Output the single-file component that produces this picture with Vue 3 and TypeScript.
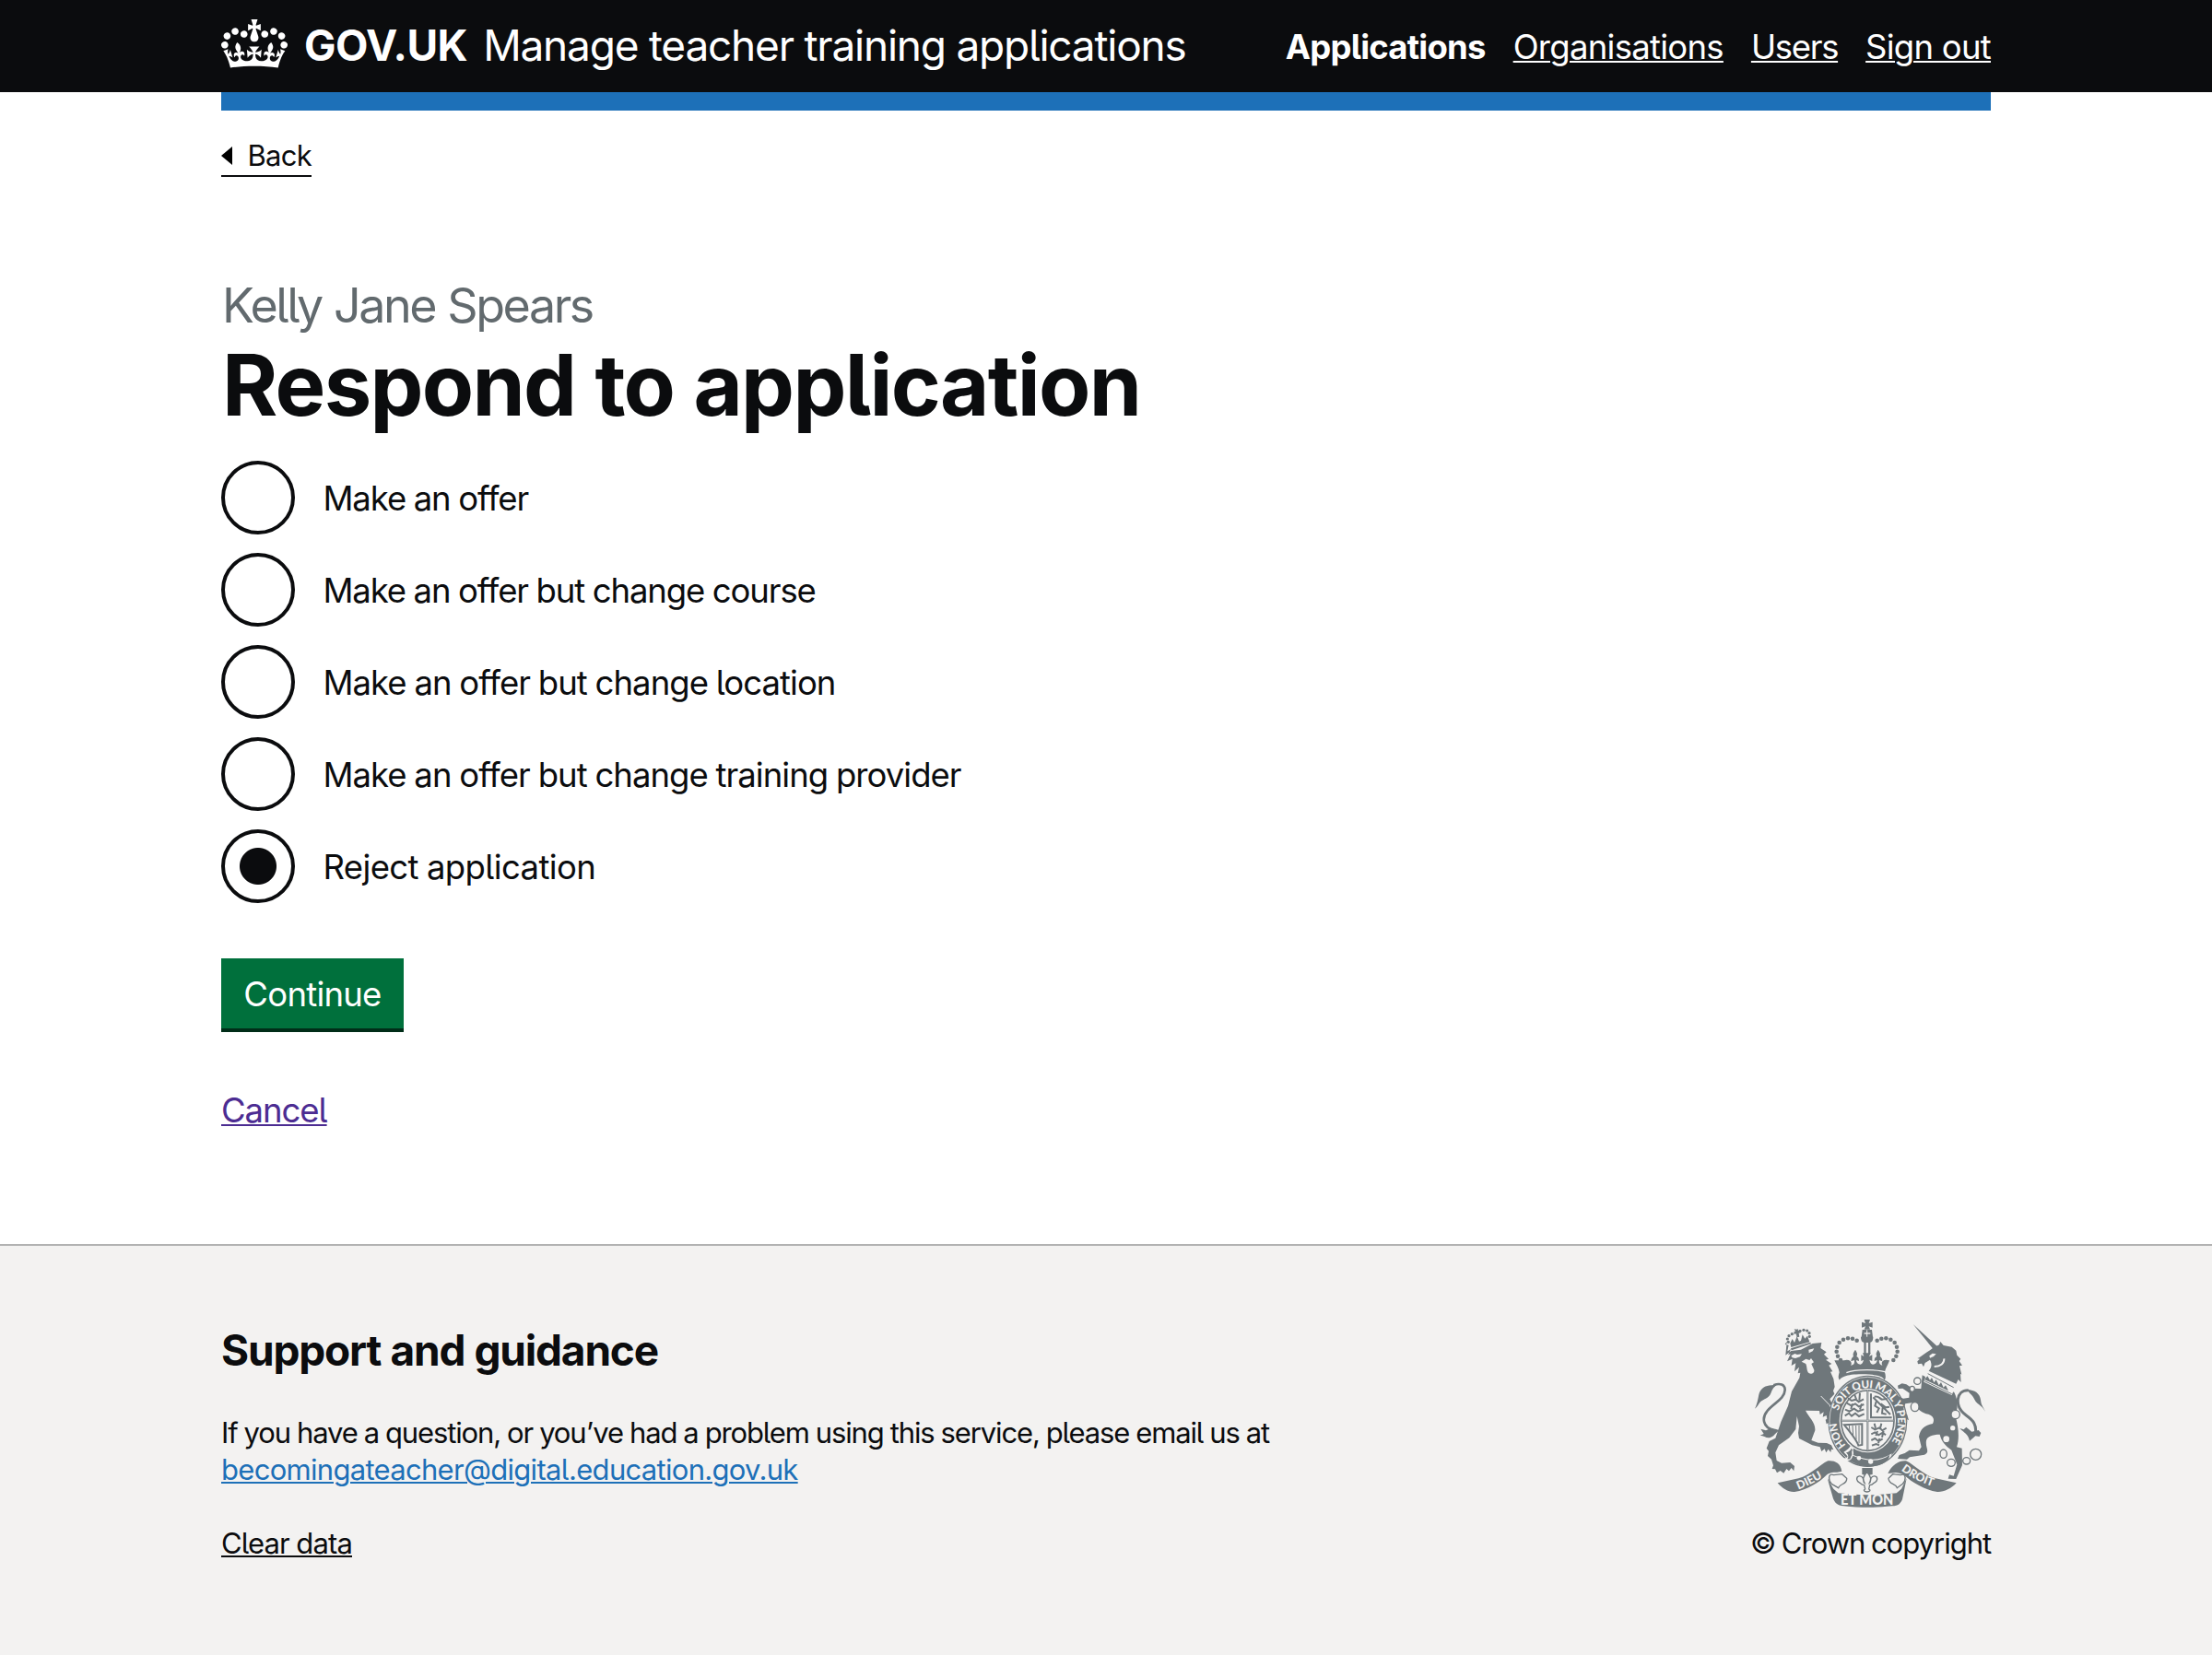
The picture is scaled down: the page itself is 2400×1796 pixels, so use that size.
<script setup lang="ts">
import { ref } from 'vue'

interface Option {
  value: string
  label: string
  cls: string
}

const navigation = [
  { label: 'Applications', cls: 'nav-applications', active: true },
  { label: 'Organisations', cls: 'nav-organisations', active: false },
  { label: 'Users', cls: 'nav-users', active: false },
  { label: 'Sign out', cls: 'nav-signout', active: false },
]

const options: Option[] = [
  { value: 'offer', label: 'Make an offer', cls: 'o1' },
  { value: 'course', label: 'Make an offer but change course', cls: 'o2' },
  { value: 'location', label: 'Make an offer but change location', cls: 'o3' },
  { value: 'provider', label: 'Make an offer but change training provider', cls: 'o4' },
  { value: 'reject', label: 'Reject application', cls: 'o5' },
]

const decision = ref('reject')

// Pearls on the left arch of the crown; the right arch mirrors them.
const pearls: [number, number][] = [
  [404, 134], [390, 128], [375, 127], [360, 131], [347, 141],
  [340, 155], [338, 170], [342, 185], [351, 198],
]
const smallPearls: [number, number][] = [
  [181, 139], [178, 129], [183, 119], [193, 113], [219, 103],
  [231, 100], [242, 102], [249, 110], [250, 121],
]
const chainLinks: [number, number, number, number][] = [
  [601, 266, 11, 11], [584, 292, 8, 9], [593, 350, 13, 15], [725, 375, 14, 14],
  [686, 503, 11, 14], [711, 532, 13, 12], [761, 526, 12, 11], [791, 505, 18, 18],
]
</script>

<template>
  <div class="page">
    <header class="header">
      <div class="width header-row">
        <svg class="crown" viewBox="0 0 132 97" aria-hidden="true">
          <path fill="currentColor" fill-rule="evenodd" d="M25 30.2c3.5 1.5 7.7-.2 9.1-3.7 1.5-3.6-.2-7.8-3.9-9.2-3.6-1.4-7.6.3-9.1 3.9-1.4 3.5.3 7.5 3.9 9zM9 39.5c3.6 1.5 7.8-.2 9.2-3.7 1.5-3.6-.2-7.8-3.9-9.1-3.6-1.5-7.6.2-9.1 3.8-1.4 3.5.3 7.5 3.8 9zM4.4 57.2c3.5 1.5 7.7-.2 9.1-3.8 1.5-3.6-.2-7.7-3.9-9.1-3.5-1.5-7.6.3-9.1 3.8-1.4 3.5.3 7.6 3.9 9.1zm38.3-21.4c3.5 1.5 7.7-.2 9.1-3.8 1.5-3.6-.2-7.7-3.9-9.1-3.6-1.5-7.6.3-9.1 3.8-1.3 3.6.4 7.7 3.9 9.1zm64.4-5.6c-3.6 1.5-7.8-.2-9.1-3.7-1.5-3.6.2-7.8 3.8-9.2 3.6-1.4 7.7.3 9.2 3.9 1.3 3.5-.4 7.5-3.9 9zm15.9 9.3c-3.6 1.5-7.7-.2-9.1-3.7-1.5-3.6.2-7.8 3.7-9.1 3.6-1.5 7.7.2 9.2 3.8 1.5 3.5-.3 7.5-3.8 9zm4.7 17.7c-3.6 1.5-7.8-.2-9.2-3.8-1.5-3.6.2-7.7 3.9-9.1 3.6-1.5 7.7.3 9.2 3.8 1.3 3.5-.4 7.6-3.9 9.1zM89.3 35.8c-3.6 1.5-7.8-.2-9.2-3.8-1.4-3.6.2-7.7 3.9-9.1 3.6-1.5 7.7.3 9.2 3.8 1.4 3.6-.3 7.7-3.9 9.1zM69.7 17.7l8.9 4.7V9.3l-8.9 2.8c-.2-.3-.5-.6-.9-.9L72.4 0H59.6l3.5 11.2c-.3.3-.6.5-.9.9l-8.8-2.8v13.1l8.8-4.7c.3.3.6.7.9.9l-5 15.4v.1c-.2.8-.4 1.6-.4 2.4 0 4.1 3.1 7.5 7 8.1h.2c.3 0 .7.1 1 .1.4 0 .7 0 1-.1h.2c4-.6 7.1-4.1 7.1-8.1 0-.8-.1-1.7-.4-2.4V34l-5.1-15.4c.4-.2.7-.6 1-.9zM66 92.8c16.9 0 32.8 1.1 47.1 3.2 4-16.9 8.9-26.7 14-33.5l-9.6-3.4c1 4.9 1.1 7.2 0 10.2-1.5-1.4-3-4.3-4.2-8.7L108.6 76c2.8-2 5-3.2 7.5-3.3-4.4 9.4-10 11.9-13.6 11.2-4.3-.8-6.3-4.6-5.6-7.9 1-4.7 5.7-5.9 8-.5 4.3-8.7-3-11.4-7.6-8.8 7.1-7.2 7.9-13.5 2.1-21.1-8 6.1-8.1 12.3-4.5 20.8-4.7-5.4-12.1-2.5-9.5 6.2 3.4-5.2 7.9-2 7.2 3.1-.6 4.3-6.4 7.8-13.5 7.2-10.3-.9-10.9-8-11.2-13.8 2.5-.5 7.1 1.8 11 7.3L80.2 60c-4.1 4.4-8 5.3-12.3 5.4 1.4-4.4 8-11.6 8-11.6H55.5s6.4 7.2 7.9 11.6c-4.2-.1-8-1-12.3-5.4l1.4 16.4c3.9-5.5 8.5-7.7 10.9-7.3-.3 5.8-.9 12.8-11.1 13.8-7.2.6-12.9-2.9-13.5-7.2-.7-5 3.8-8.3 7.1-3.1 2.7-8.7-4.6-11.6-9.4-6.2 3.7-8.5 3.6-14.7-4.6-20.8-5.8 7.6-5 13.9 2.2 21.1-4.7-2.6-11.9.1-7.7 8.8 2.3-5.5 7.1-4.2 8.1.5.7 3.3-1.3 7.1-5.7 7.9-3.5.7-9-1.8-13.5-11.2 2.5.1 4.7 1.3 7.5 3.3l-4.7-15.4c-1.2 4.4-2.7 7.2-4.3 8.7-1.1-3-.9-5.3 0-10.2l-9.5 3.4c5 6.9 9.9 16.7 14 33.5 14.8-2.1 30.8-3.2 47.7-3.2z" />
        </svg>
        <a class="logotype">GOV.UK</a>
        <a class="service">Manage teacher training applications</a>
        <nav class="nav">
          <a v-for="item in navigation" :key="item.label" :class="[item.cls, { active: item.active }]">{{ item.label }}</a>
        </nav>
      </div>
    </header>

    <div class="width bar"></div>

    <main class="width main">
      <a class="back">
        <svg class="arrow" viewBox="0 0 12 20" aria-hidden="true"><path d="M12 0v20L0 10z" /></svg>
        <span>Back</span>
      </a>
      <div class="caption">Kelly Jane Spears</div>
      <h1 class="title">Respond to application</h1>

      <div class="radios">
        <label v-for="option in options" :key="option.value" class="radio">
          <input v-model="decision" class="radio-input" type="radio" name="decision" :value="option.value" />
          <span class="radio-label" :class="option.cls">{{ option.label }}</span>
        </label>
      </div>

      <button class="button" type="button"><span>Continue</span></button>
      <div class="cancel-row"><a class="cancel">Cancel</a></div>
    </main>

    <footer class="footer">
      <div class="width footer-row">
        <div class="support">
          <h2 class="support-title">Support and guidance</h2>
          <p class="support-text">
            <span class="question">If you have a question, or you’ve had a problem using this service, please email us at</span><br />
            <a class="email">becomingateacher@digital.education.gov.uk</a>
          </p>
          <a class="clear">Clear data</a>
        </div>

        <div class="crest">
          <svg class="arms" viewBox="60 60 780 630" aria-hidden="true">
            <defs>
              <path id="garter-main" d="M344 363 A99 108 0 0 1 438 289 A99 108 0 0 1 480 495" />
              <path id="garter-start" d="M369 475 A99 108 0 0 1 340 380" />
              <path id="motto-left" d="M214 619 Q264 600 326 560" />
              <path id="motto-right" d="M548 556 Q606 600 682 618" />
            </defs>

            <!-- lion -->
            <g class="ink">
              <circle v-for="(p, i) in smallPearls" :key="i" :cx="p[0]" :cy="p[1]" r="4.8" />
              <path d="M200 97l8 1 4-2 1 7 7-2 1 8-6 1 2 12-8 2-3-12-6 2-1-8 5-2z" />
              <path d="M190 156l-3-13 7-14 7 12 8-20 7 16 6-2 5-20 8 13 8-9 7 20z" />
              <path d="M189 160l64-20 2 5-64 21z" />
              <path d="M172 182l18-14 32-4 38-20 29-3-3 18 19 13-8 7 15 15-9 3 19 13-9 5 12 20-7 1 10 23 4 26-5 13 4 10-15 17 4 8 8 15 16 25 2 22-3 20-8-9-4 14-6-12-9 6-5-12-6 4-3-14 5-3-2-11-12 5 3-16-12 8-2-12-45-1c12 24 33 38 31 65l-12 32 22 8 28 1 15 7 7 15-7-2-2 10-8-10-7 11-5-12-10 8-5-14-25-6-43-22-3-18 3-22-7-32-4 42-21 28-34 24-11 24 4 26 16 8 28-2 14 12-2 16-8-10-8 10-8-7-9 14-11-8-11 7-6-12-10-1 4-11-6-20-12-11 3-16-7-9 9-23 20-10 18-53 23-52 12-47 25-44 3-17-8 2 4-20-15 14 4-27-14 8 3-22-17 8 11-24-8 3 9-18-11 6 4-20-12-2 6-10z" />
              <path d="M72 356c12-26 10-38 15-52 5-14 22-25 41-24l18-4c-11 9-18 16-22 30-7 17-26 20-33 27-8 7-8 15-19 23z" />
              <path d="M155 427c-17 5-18 20-33 23-13 3-20-6-33-7l12-5-10-16 17 5 17-8c10 2 15 3 30 8z" />
            </g>
            <path class="line" d="M132 426c-34-10-38-40-20-62 17-24 57-38 58-69 0-17-16-24-37-15" stroke-width="8" />
            <g class="paper">
              <path d="M190 184l12-7 8 3 15-2-6 9-15 5-10-2z" />
              <path d="M247 164l18-4-5 9-12 6z" />
              <path d="M224 203l14-9 12 4 5-6 9 13-8 5 9 20c2 13-15 15-20 8-5-10-3-19-7-28z" />
            </g>
            <path class="cut" d="M287 315l28 29 12 24" stroke-width="3" />

            <!-- central crown -->
            <g class="ink">
              <path d="M428 66h19l-4 12 12-4v18l-12-4 4 10h-19l4-10-12 4V74l12 4z" />
              <path d="M422 99h31l3 24c-6 7-31 7-37 0z" />
              <template v-for="(p, i) in pearls" :key="i">
                <circle :cx="p[0]" :cy="p[1]" r="6.8" />
                <circle :cx="874 - p[0]" :cy="p[1]" r="6.8" />
              </template>
              <path d="M417 122h40c0 18-8 19-20 19s-20-1-20-19z" />
              <path d="M427 140h7v38h-7zM441 140h7v38h-7z" />
              <path d="M362 199c20-7 29 9 22 16 12-1 14-10 11-17l-10 4c1-12 6-14 8-16-3-9 0-13 6-22 6 9 8 15 4 22 5 2 8 6 8 15l-9-3c0 8 5 13 14 14 6-2 8-8 10-15l-8 4v-20l9 5-4-11h26l-5 11 10-5v20l-9-4c2 8 5 14 11 15 9-1 13-6 14-14l-9 3c0-9 3-13 8-15-4-7-2-13 4-22 6 9 9 13 6 22 5 3 8 7 8 16l-10-4c-2 9 2 16 10 17-6-10 2-23 23-16-4 14-12 22-15 39 3 9 4 20-1 25-3-8-12-19-73-19-55 0-69 11-73 19-6-6-4-16-1-25-2-16-10-25-16-39z" />
            </g>
            <path class="cut" d="M370 239c27-12 107-12 134 0" stroke-width="4" />
            <path class="cut" d="M428 111h20" stroke-width="4" />
            <path class="cut" d="M437 100v22" stroke-width="3" />

            <!-- garter -->
            <ellipse class="ink" cx="439" cy="397" rx="129" ry="149" />
            <ellipse class="cut" cx="439" cy="397" rx="124" ry="144" stroke-width="2" />
            <ellipse class="paper" cx="439" cy="395" rx="92" ry="104" />
            <ellipse class="line" cx="439" cy="395" rx="86" ry="98" stroke-width="5" />
            <path class="line" d="M439 294v198M355 395h168" stroke-width="6" />
            <path class="cut" d="M439 294v198M355 395h168" stroke-width="1.5" />
            <g class="line" stroke-width="6">
              <path d="M375 322l12 8 14-4 9 8 16-9M371 338l15 8 13-6 11 9 17-7M366 359l14 6 15-9 13 9 19-7M365 379l13-8 9 9 12-9 12 10 17-8M396 309l6 16M414 305l-2 24M390 340l-5 17M420 340l-6 19" />
              <path d="M451 417l12 7 14-6 10 9 13-8M451 439l12-6 12 9 13-8 10 8M451 459l12-6 12 9 13-8M453 476l14-5 10 4M461 404l4 15M484 404l-5 20M471 429l-5 15M491 429l-5 20M478 453l-4 16" />
              <path d="M450 307v78h68M457 319l56 56M461 317c14-3 15 4 24 9l18-2M467 333l-4 14 13 8-7 14M482 340l16 12 12-2M488 353l-2 18 14 3" />
            </g>
            <path class="line" d="M363 409l58-3v68l-12 2c-4-14-15-30-46-67z" stroke-width="6" />
            <path class="line" d="M379 411l2 20M390 411l2 35M401 411l1 46M411 411v58" stroke-width="3" />
            <path class="paper" d="M361 497c10-5 20-14 22-20l11 8c-6 8 2 12-2 22 50 21 90 19 126-5l-4 12c-34 25-85 25-131 7-7 9-22 5-22-4 8 1 14-2 12-7z" />
            <path class="ink" d="M369 499c9-2 16-8 17-14l4 5c-6 7 2 14-5 22-2 8-6 10-12 8 5-5 4-14-4-21z" />
            <path class="ink" d="M391 509c50 22 90 20 120-3-2 25-35 40-73 38-27-1-41-11-58-19 6-5 9-9 11-16z" />
            <circle class="paper" cx="411" cy="517" r="7" />
            <circle class="paper" cx="449" cy="528" r="8" />

            <!-- unicorn -->
            <g class="ink">
              <path d="M587 81l81 74-13 10z" />
              <path d="M607 190c18-14 32-22 45-32l20-10 4-10 10 12 27 5 14 12 3 15 12 12-5 7 10 14-9 2 7 28-4-3 2 28-9-9-7 14-89-42c10-11 11-23 4-36l-16 10-5 13-6-11-12 2-2-9 8-8-8-2z" />
              <path d="M617 247l104 56c13 26 12 53 4 77 11 40 13 75 4 101l17 4 1 55-20 45-26-1 4-13 14 4 11-37-18-47c-21-15-33-30-38-51-25 0-42 7-44 20-4 24 14 36-6 46l-48 8-9 7-30-2 5-12 18-6 15-10 31 2 8-12-8-34c5-26 18-36 45-42 6-13 4-24-14-31-24-3-37-20-49-38l-26 4-10 22 16 14 5 18-9-5-2 12-7-9-8 3-4-12-8-4 1-13 9-16-13-9-10 5-2-18 16-14 19 9 19-3 1-15-22-15-14 1-2-10 14-7 14 3 20 13 28 1z" />
              <path d="M739 420l13 4 8-8 18 15 22-5 8 9-5 12-13-2-19 16c-4-22-19-27-32-41z" />
              <path d="M822 366c-9-20-13-20-15-39-3-20-18-32-45-33 9 14 17 15 25 32 7 16 23 17 35 40z" />
            </g>
            <path class="line" d="M790 436c4-27-6-41-30-58-41-30-33-83 7-82" stroke-width="9" />
            <path class="paper" d="M640 184l10-8 12 2-8 8-12 5z" />
            <path class="cut" d="M656 219c21-1 33-11 32-26" stroke-width="6" />
            <path class="paper" d="M632 237l92 49-11 26-91-43z" />
            <path class="line" d="M635 242l84 45M625 266l88 42" stroke-width="3" />
            <path class="ink" d="M634 250l8 13 6-8 7 16 7-9 9 18 7-10 8 17 7-7 9 18-78-37z" />
            <ellipse v-for="(c, i) in chainLinks" :key="i" class="ring" :cx="c[0]" :cy="c[1]" :rx="c[2]" :ry="c[3]" />
            <circle class="paper" cx="695" cy="455" r="10" />
            <circle class="paper" cx="716" cy="419" r="8" />

            <text class="motto garter-text"><textPath href="#garter-main">SOIT QUI MAL Y PENSE</textPath></text>
            <text class="motto garter-text"><textPath href="#garter-start">HON</textPath></text>

            <!-- motto ribbon -->
            <g class="ink">
              <path d="M146 598l68-15c39-10 69-45 96-57 21-2 41 6 45 34l-15 3c-22-1-32 5-38 12-17 18-59 45-101 52-21 1-38-10-55-29z" />
              <path d="M728 598l-68-15c-39-10-69-45-96-57-21-2-46 12-59 41l26-3c13 2 23 5 30 11 20 18 63 45 105 52 21 1 45-10 62-29z" />
              <path d="M308 583l20 34 16 14c63 8 125 8 189 0l16-14 17-34-14 68c-6 14-13 22-33 22-58 6-100 6-158 0-20 0-29-11-34-24z" />
            </g>
            <path class="fold" d="M329 572c-21-9-17 21-7 29l22 13c5-16 29-10 27-31l-15-14zM546 572c21-9 17 21 7 29l-18 13c-5-16-28-10-28-31l14-14z" />
            <text class="motto" font-size="37"><textPath href="#motto-left">DIEU</textPath></text>
            <text class="motto" font-size="37"><textPath href="#motto-right">DROIT</textPath></text>
            <text class="motto" font-size="49" x="351" y="670" textLength="172" lengthAdjust="spacingAndGlyphs">ET MON</text>

            <!-- lily -->
            <path class="ink" d="M421 549h34v21l-11 2-7-12-7 12-9-2z" />
            <path class="fold" d="M437 562c14 17 14 23 8 36 5-3 3-11 5-15 5-11 21-9 20 3-1 9-7 10-12 13-4 4-6 5-12 6l-3 13c7 3 3 9-6 9s-13-6-6-9l-3-13c-6-1-8-2-12-6-5-3-11-4-12-13-1-12 15-14 20-3 2 4 0 12 5 15-6-13-6-19 8-36z" />
          </svg>
          <span class="copyright">© Crown copyright</span>
        </div>
      </div>
    </footer>
  </div>
</template>

<style>
body {
  margin: 0;
  background: #f3f2f1;
}
</style>

<style scoped>
.page {
  width: 2400px;
  height: 1796px;
  overflow: hidden;
  display: flex;
  flex-direction: column;
  background: #fff;
  color: #0b0c0e;
  font-family: Inter, "Noto Sans", sans-serif;
  font-feature-settings: "cv05" 1, "calt" 0;
  font-size: 36.5px;
  white-space: nowrap;
}
.width {
  width: 1920px;
  margin: 0 auto;
}
a {
  text-decoration-thickness: 2px;
  text-underline-offset: 2px;
}
.header {
  height: 100px;
  background: #0b0c0e;
  color: #fff;
}
.header-row {
  height: 100px;
  display: flex;
  align-items: center;
  line-height: 100px;
}
.crown {
  width: 72px;
  height: 53px;
  margin-bottom: 5px;
}
.logotype {
  margin: -2px 0 0 18px;
  font-size: 46px;
  font-weight: 700;
  letter-spacing: -0.5px;
}
.service {
  margin: -2px 0 0 17px;
  font-size: 46px;
  letter-spacing: -1.22px;
}
.nav {
  margin-left: auto;
  display: flex;
  gap: 30px;
  padding-top: 2px;
}
.nav a {
  text-decoration-line: underline;
}
.nav .active {
  font-weight: 700;
  text-decoration-line: none;
}
.nav-applications {
  letter-spacing: -0.78px;
}
.nav-organisations {
  letter-spacing: -0.72px;
}
.nav-users {
  letter-spacing: -1.3px;
}
.nav-signout {
  letter-spacing: -0.75px;
}
.bar {
  height: 20px;
  background: #1d70b8;
}
.main {
  height: 1230px;
  display: flex;
  flex-direction: column;
  align-items: flex-start;
}
.back {
  display: flex;
  align-items: center;
  margin-top: 30px;
  padding-bottom: 2px;
  border-bottom: 2px solid #0b0c0e;
  font-size: 31px;
  line-height: 38px;
  letter-spacing: -0.75px;
}
.arrow {
  width: 12px;
  height: 20px;
  margin-right: 16.5px;
}
.caption {
  margin: 110px 0 0 1px;
  font-size: 52px;
  line-height: 60px;
  color: #626a6e;
  letter-spacing: -2.45px;
  word-spacing: 1px;
}
.title {
  margin: 6px 0 32px 1px;
  font-size: 92px;
  line-height: 100px;
  font-weight: 700;
  letter-spacing: -1.7px;
  word-spacing: 1px;
}
.radios {
  display: flex;
  flex-direction: column;
  gap: 20px;
}
.radio {
  display: flex;
  align-items: center;
  height: 80px;
}
.radio-input {
  appearance: none;
  box-sizing: border-box;
  width: 80px;
  height: 80px;
  margin: 0 30.5px 0 0;
  border: 4px solid #0b0c0e;
  border-radius: 50%;
  background: #fff;
}
.radio-input:checked {
  background: radial-gradient(circle, #0b0c0e 19.5px, #fff 20.5px);
}
.radio-label {
  line-height: 80px;
  padding-top: 1px;
  word-spacing: -0.5px;
}
.o1 {
  letter-spacing: -1.1px;
}
.o2 {
  letter-spacing: -1.12px;
}
.o3 {
  letter-spacing: -0.96px;
}
.o4 {
  letter-spacing: -0.97px;
}
.o5 {
  letter-spacing: -0.63px;
}
.button {
  width: 198px;
  height: 76px;
  margin: 60px 0 0;
  padding: 0;
  border: 0;
  background: #00703c;
  box-shadow: 0 4px 0 #002d18;
  color: #fff;
  font: inherit;
  font-feature-settings: inherit;
  letter-spacing: -0.75px;
  line-height: 78px;
}
.cancel-row {
  margin-top: 64px;
  line-height: 50px;
}
.cancel {
  color: #4c2c92;
  text-decoration-line: underline;
  letter-spacing: -1.05px;
}
.footer {
  flex: 1;
  border-top: 2px solid #b2b2b2;
  background: #f3f2f1;
}
.footer-row {
  display: flex;
  justify-content: space-between;
  font-size: 31px;
  line-height: 40px;
}
.support-title {
  margin: 83px 0 40px;
  font-size: 46px;
  line-height: 60px;
  font-weight: 700;
  letter-spacing: -1.18px;
  word-spacing: 0.5px;
}
.support-text {
  margin: 0 0 40px;
}
.question {
  letter-spacing: -1.14px;
  word-spacing: -0.5px;
}
.email {
  color: #1d70b8;
  text-decoration-line: underline;
  letter-spacing: -0.7px;
}
.clear {
  text-decoration-line: underline;
  letter-spacing: -0.85px;
  word-spacing: -0.5px;
}
.crest {
  width: 260px;
  display: flex;
  flex-direction: column;
  padding-top: 78px;
}
.arms {
  width: 260px;
  height: 210px;
  margin-bottom: 15px;
}
.copyright {
  margin-left: -1px;
  letter-spacing: -1px;
  word-spacing: -1.2px;
}
.ink {
  fill: #6f777b;
}
.paper {
  fill: #f3f2f1;
}
.line {
  fill: none;
  stroke: #6f777b;
}
.cut {
  fill: none;
  stroke: #f3f2f1;
}
.ring {
  fill: #f3f2f1;
  stroke: #6f777b;
  stroke-width: 4;
}
.fold {
  fill: #f3f2f1;
  stroke: #6f777b;
  stroke-width: 4;
}
.motto {
  fill: #f3f2f1;
  font-family: Lato, sans-serif;
  font-weight: 900;
}
.garter-text {
  font-size: 35px;
  letter-spacing: -1px;
}
</style>
